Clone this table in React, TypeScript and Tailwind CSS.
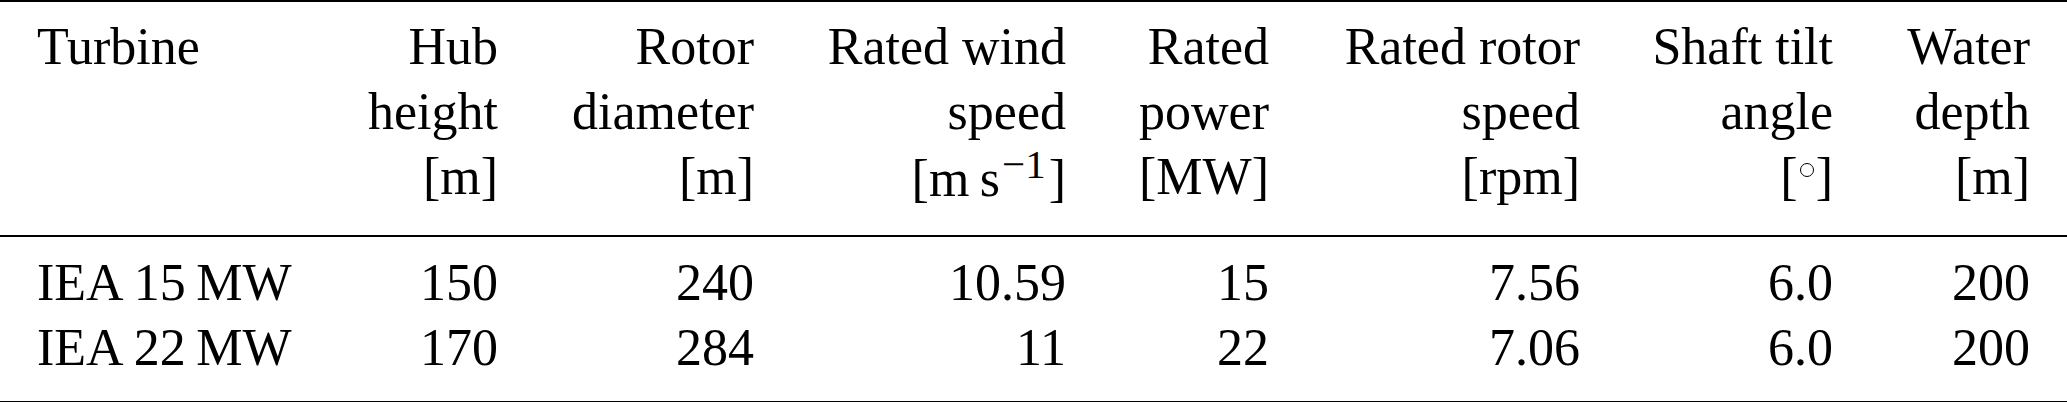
import type { ReactNode } from "react";

type Column = {
  width: string;
  head: ReactNode[];
  rows: string[];
  left?: boolean;
};

const speedUnit = (
  <>
    [m{"\u2009"}s
    <span className="ml-[2px] align-[18px] text-[41px] leading-none">{"\u22121"}</span>
    <span className="ml-[3px]">]</span>
  </>
);

const degreeUnit = (
  <>
    [
    <span className="mx-[2px] inline-block h-[14px] w-[14px] rounded-full border-[1.5px] border-black align-[17px]" />
    ]
  </>
);

const columns: Column[] = [
  { width: "w-[332px]", head: ["Turbine"], rows: ["IEA 15\u2009MW", "IEA 22\u2009MW"], left: true },
  { width: "w-[203px]", head: ["Hub", "height", "[m]"], rows: ["150", "170"] },
  { width: "w-[256px]", head: ["Rotor", "diameter", "[m]"], rows: ["240", "284"] },
  { width: "w-[312px]", head: ["Rated wind", "speed", speedUnit], rows: ["10.59", "11"] },
  { width: "w-[203px]", head: ["Rated", "power", "[MW]"], rows: ["15", "22"] },
  { width: "w-[311px]", head: ["Rated rotor", "speed", "[rpm]"], rows: ["7.56", "7.06"] },
  { width: "w-[253px]", head: ["Shaft tilt", "angle", degreeUnit], rows: ["6.0", "6.0"] },
  { width: "w-[197px]", head: ["Water", "depth", "[m]"], rows: ["200", "200"] },
];

function cellPad(col: Column) {
  return col.left ? "pl-[37px] text-left" : "pr-[37px] text-right";
}

export default function App() {
  return (
    <div className="min-h-screen bg-white text-black">
      <table className="w-[2067px] table-fixed border-collapse font-['Liberation_Serif','Times_New_Roman',serif] text-[52px] leading-[65px]">
        <colgroup>
          {columns.map((col, i) => (
            <col key={i} className={col.width} />
          ))}
        </colgroup>
        <thead className="border-t-2 border-b-2 border-black">
          <tr>
            {columns.map((col, i) => (
              <th
                key={i}
                className={`whitespace-nowrap pt-[12px] pb-[24px] align-top font-normal ${cellPad(col)}`}
              >
                {col.head.map((line, j) => (
                  <div key={j}>{line}</div>
                ))}
              </th>
            ))}
          </tr>
        </thead>
        <tbody className="border-b-[3px] border-black">
          {[0, 1].map((r) => (
            <tr key={r}>
              {columns.map((col, i) => (
                <td
                  key={i}
                  className={`whitespace-nowrap ${r === 0 ? "pt-[13px]" : "pb-[21px]"} ${cellPad(col)}`}
                >
                  {col.rows[r]}
                </td>
              ))}
            </tr>
          ))}
        </tbody>
      </table>
    </div>
  );
}
